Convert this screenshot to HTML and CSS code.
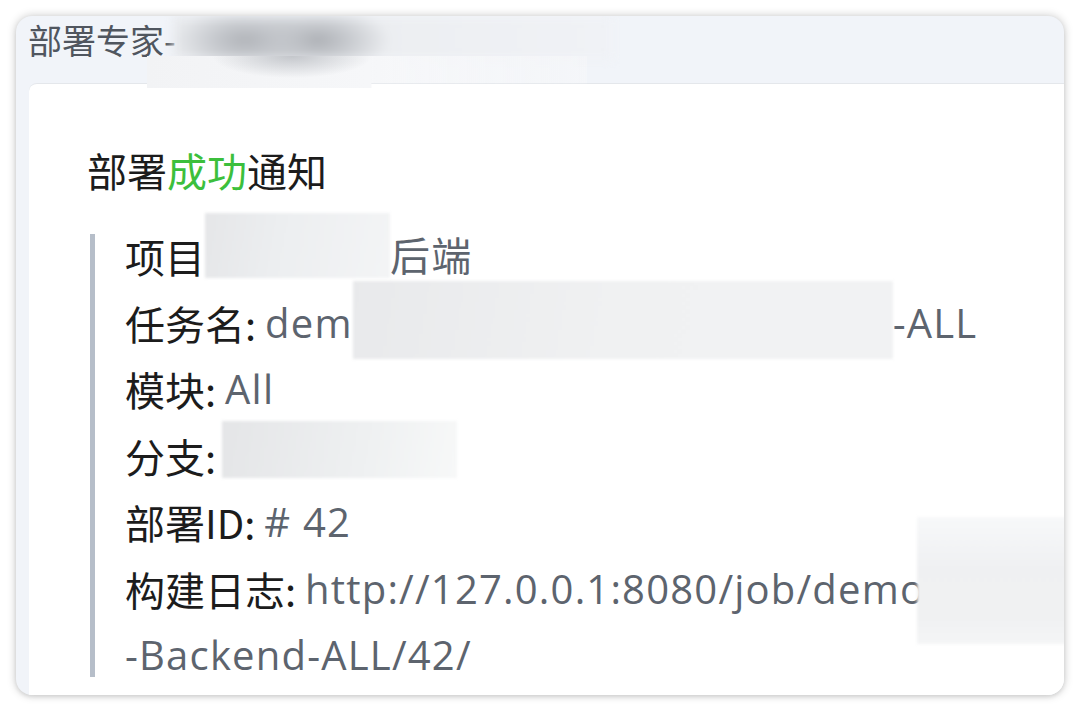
FILE: index.html
```html
<!DOCTYPE html>
<html lang="zh-CN">
<head>
<meta charset="utf-8">
<title>部署成功通知</title>
<link rel="stylesheet" href="styles.css">
</head>
<body>
  <div class="window">
    <div class="header">
      <span class="sender">部署专家-</span>
      <span class="header-redact top"></span>
      <span class="header-redact under"></span>
    </div>
    <div class="card">
      <div class="title">部署<span class="ok">成功</span>通知</div>
      <div class="quote">
        <div class="line"><span class="label">项目</span><span class="redact r1"></span><span class="value">后端</span></div>
        <div class="line"><span class="label">任务名: </span><span class="value">dem</span><span class="redact r2"></span><span class="value">-ALL</span></div>
        <div class="line"><span class="label">模块: </span><span class="value">All</span></div>
        <div class="line"><span class="label">分支:</span><span class="redact r4"></span></div>
        <div class="line"><span class="label">部署ID: </span><span class="value"># 42</span></div>
        <div class="line"><span class="label">构建日志: </span><span class="value">http://127.0.0.1:8080/job/demo</span><span class="redact r6"></span></div>
        <div class="line"><span class="value">-Backend-ALL/42/</span></div>
      </div>
    </div>
  </div>
</body>
</html>
```

FILE: styles.css
```css
* { box-sizing: border-box; }

html, body {
  margin: 0;
  padding: 0;
  background: #ffffff;
}

body {
  padding: 16px;
  font-family: "Open Sans", "Noto Sans CJK SC", sans-serif;
}

.window {
  width: 1048px;
  height: 679px;
  border-radius: 16px;
  background: #f1f4f9;
  box-shadow: 0 0 10px rgba(0, 0, 0, 0.22), 0 2px 4px rgba(0, 0, 0, 0.08);
  overflow: hidden;
  display: flex;
  flex-direction: column;
}

.header {
  position: relative;
  height: 67px;
  flex: none;
  padding: 2px 0 0 12px;
  display: flex;
  align-items: flex-start;
}

.sender {
  font-family: "Noto Sans CJK SC", sans-serif;
  font-size: 34px;
  line-height: 44px;
  color: #50565f;
}

.header-redact {
  position: absolute;
  z-index: 2;
}

.header-redact.top {
  left: 157px;
  top: 0;
  width: 440px;
  height: 44px;
  background:
    radial-gradient(ellipse 72px 34px at 72px 24px, rgba(176, 179, 184, 1) 0%, rgba(190, 193, 198, 0.85) 40%, rgba(236, 238, 242, 0) 100%),
    radial-gradient(ellipse 74px 34px at 144px 24px, rgba(172, 175, 180, 1) 0%, rgba(190, 193, 198, 0.85) 40%, rgba(236, 238, 242, 0) 100%),
    linear-gradient(90deg, #e8eaed 0%, #eceef1 45%, #f0f2f6 100%);
  filter: blur(5px);
}

.header-redact.under {
  left: 131px;
  top: 40px;
  width: 440px;
  height: 32px;
  background:
    radial-gradient(ellipse 80px 22px at 145px 0px, rgba(190, 193, 198, 0.9), rgba(240, 242, 245, 0) 100%),
    linear-gradient(90deg, #f2f3f5 0%, #f6f7f9 50%, #f6f7f9 51%, rgba(246, 247, 249, 0.6) 100%);
  background-repeat: no-repeat;
  clip-path: polygon(0 0, 100% 0, 100% 85%, 51% 85%, 51% 100%, 0 100%);
  filter: blur(0.6px);
}

.card {
  flex: 1;
  margin-left: 13px;
  background: #ffffff;
  border-top: 1px solid #e4e7eb;
  border-top-left-radius: 8px;
  padding: 62px 0 0 58px;
  overflow: hidden;
}

.title {
  font-family: "Noto Sans CJK SC", sans-serif;
  font-size: 40px;
  line-height: 48px;
  color: #1c1c1c;
  white-space: nowrap;
}

.ok {
  color: #3cbf3c;
}

.quote {
  margin-top: 40px;
  margin-left: 3px;
  border-left: 5px solid #b6bec9;
  padding-left: 30px;
  display: flex;
  flex-direction: column;
  gap: 22.5px;
}

.line {
  font-size: 40px;
  line-height: 44px;
  height: 44px;
  white-space: nowrap;
  display: flex;
  align-items: center;
}

.label {
  color: #1c1c1c;
  font-family: "Noto Sans CJK SC", sans-serif;
  white-space: pre;
}

.value {
  color: #5d646e;
  white-space: pre;
  letter-spacing: 1.2px;
}

.redact {
  position: relative;
  display: inline-block;
  height: 44px;
  flex: none;
}

.redact::before {
  content: "";
  position: absolute;
  left: 0;
  right: 0;
  background: linear-gradient(100deg, #e5e6e8 0%, #eceef0 40%, #f3f4f5 100%);
  filter: blur(1.5px);
}

.r1 { width: 185px; }
.r1::before { top: -21px; bottom: 0; }

.r2 { width: 540px; }
.r2::before { top: -20px; bottom: -14px; background: linear-gradient(100deg, #e8e9eb 0%, #f0f1f2 50%, #f1f2f3 100%); }

.r4 { width: 235px; margin-left: 6px; }
.r4::before { top: -13px; bottom: 0; background: linear-gradient(100deg, #e4e5e7 0%, #eef0f1 60%, #f7f8f8 100%); }

.r6 { width: 200px; margin-left: -8px; }
.r6::before { top: -50px; bottom: -33px; background: linear-gradient(180deg, #f7f8f9 0%, #eff0f2 40%, #f0f1f2 80%, #f4f5f6 100%); }
```
